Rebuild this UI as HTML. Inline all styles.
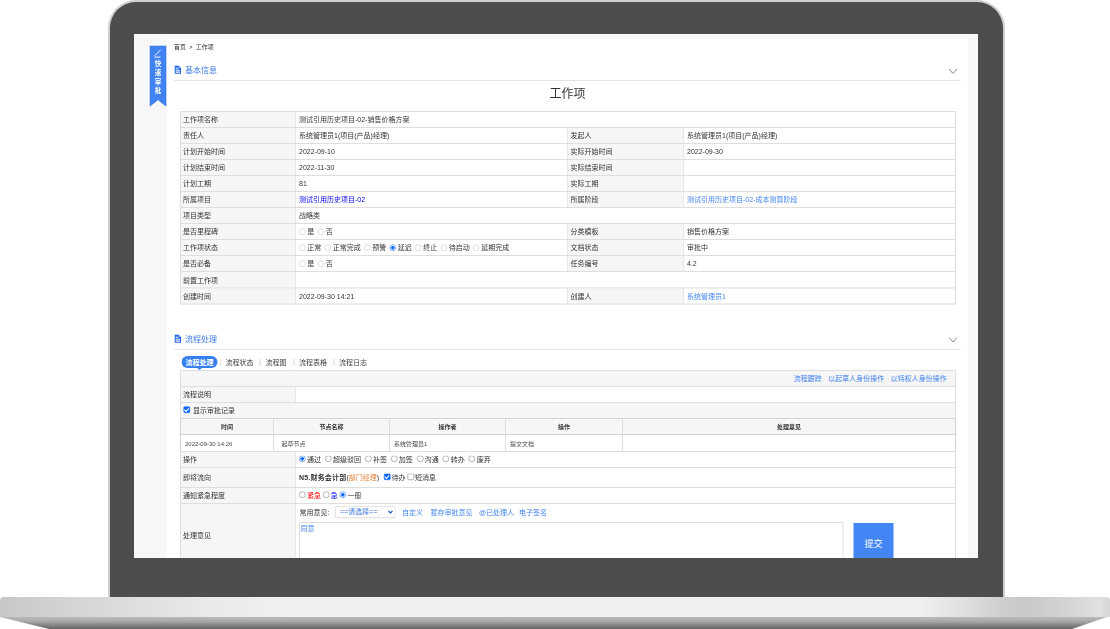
<!DOCTYPE html>
<html lang="zh-CN">
<head>
<meta charset="utf-8">
<title>工作项</title>
<style>
*{box-sizing:border-box;margin:0;padding:0}
html,body{width:1110px;height:629px;overflow:hidden;background:#fff}
body{position:relative;font-family:"Liberation Sans","Noto Sans CJK SC",sans-serif;color:#333}
/* laptop */
#lid{position:absolute;left:108px;top:0;width:897px;height:597px;background:#4d4d4d;border:2px solid #cfcfcf;border-bottom:0;border-radius:28px 28px 0 0}
#base{position:absolute;left:0;top:597px;width:1110px;height:20px;border-radius:4px 4px 0 0;
 background:linear-gradient(90deg,#c7c8c9 0,#d2d3d3 65px,#dedede 135px,#e9e9e9 205px,#f0f0f0 285px,#f0f0f0 920px,#e2e2e2 958px,#d0d0d0 998px,#c8c8c8 1025px,#d4d4d4 1068px,#e1e1e1 1100px,#d6d6d6 1110px)}
#foot{position:absolute;left:0;top:617px;width:1110px;height:12px}
#screen{position:absolute;left:134px;top:34px;width:844px;height:524px;overflow:hidden;background:#f7f7f7}
/* 2x page scaled to 0.5 */
#page{position:absolute;left:0;top:0;width:1688px;height:1048px;transform:scale(.5);transform-origin:0 0;font-size:14px;line-height:20px}
#panel{position:absolute;left:66px;top:10px;width:1602px;height:1060px;background:#fff}
.abs{position:absolute}
a{text-decoration:none}
/*CONTENTCSS*/
.rb{width:34px;text-align:center;color:#fff;font-weight:bold;font-size:13px;line-height:18px}
.bc{font-size:12px;line-height:20px;color:#333}
.bc .gt{margin:0 6.5px 0 7px;font-size:10px;font-weight:bold;position:relative;top:-.5px;color:#444}
.sh{height:24px;line-height:24px;font-size:16px;color:#3f7be6;white-space:nowrap}
.sh svg{vertical-align:-3px;margin-left:1.4px;margin-right:7.6px}
.hr{height:2px;background:#e3e3e3}
.ttl{text-align:center;font-size:24px;line-height:34px;color:#333}
.t{position:absolute;left:92px;width:1552px;border-collapse:collapse;table-layout:fixed}
.t td{border:2px solid #dedede;height:32px;padding:0 6px 0 6px;font-size:14px;line-height:20px;vertical-align:middle;white-space:nowrap;overflow:hidden}
.t td.l{background:#f6f6f6;padding-left:4px}
.t td{border-left-color:#e7e7e7;border-right-color:#e7e7e7}
.t td:first-child{border-left-color:#dedede}
.t td:last-child{border-right-color:#dedede}
.t td.l:nth-child(3){padding-left:5px}
.b1{color:#0000ee}
.b2{color:#4285f4}
.t td.rc{padding-left:5px}
.t td.rc2{padding-left:0}
.t td.rc3{padding-left:0}
.r{display:inline-block;width:13px;height:13px;border:1.8px solid #6c6c6c;border-radius:50%;vertical-align:-1.5px;margin:0 3px 0 4px;background:#fff}
.rc2 .r:first-child,.rc3 .r:first-child{margin-left:6px}
.rc3 .r{margin-left:3.5px}
.rc .r{margin:0 3px 0 7px}
.rc .r:first-child{margin-left:1.4px}
.r.d{border-color:#bdbdbd}
.r.on{border-color:#0f67ff;background:radial-gradient(circle,#0f67ff 0,#0f67ff 3.3px,#fff 3.9px)}
.rc2 .r,.rc3 .r{vertical-align:-.2px}
.c{display:inline-block;width:13px;height:13px;border:1.8px solid #6c6c6c;border-radius:2.5px;vertical-align:-.4px;margin:0 2px 0 3px;background:#fff;position:relative}
.c.on{background:#0f67ff;border-color:#0f67ff}
.c.on:after{content:"";position:absolute;left:2.3px;top:-.8px;width:3.6px;height:7.4px;border:solid #fff;border-width:0 2.2px 2.2px 0;transform:rotate(42deg)}
.t td.lk{text-align:right;padding-right:17px}
.lk a{margin-left:13px}
.t2 td{border-color:#d2d2d2;height:34px;font-size:12px;padding:2px 0 0 15px;color:#484848}
.t2 tr.h td{background:#f6f6f6;text-align:center;padding:0;height:32px;color:#333;font-weight:bold}
.t2 td.p8{padding-left:8px}
.t2 td:first-child{border-left-color:#cfcfcf}
.t2 td:last-child{border-right-color:#cfcfcf}
.t2 td{border-left-color:#dcdcdc;border-right-color:#dcdcdc}
.pill{width:72px;height:24px;line-height:24px;font-size:14px;border-radius:12px;background:#3680f4;color:#fff;font-weight:bold;text-align:center}
.tb{height:22px;line-height:22px;font-size:14px;color:#444;white-space:nowrap}
.sp{width:2px;height:14px;background:#dadada}
.op{position:absolute;left:7px;top:4px;height:24px;line-height:24px}
.sel{display:inline-block;width:121px;height:24px;border:1.6px solid #b9b9b9;border-radius:3px;margin:-2px 13px 0 11px;vertical-align:middle;line-height:20px;color:#3b78e0;padding-left:9px;position:relative;background:#fff}
.sel svg{position:absolute;right:4px;top:8px}
.op a{margin-right:15px}
.ta{position:absolute;left:6px;top:36px;width:1089px;height:88px;border:2px solid #dedede;color:#4285f4;padding:0 1px;line-height:20px}
.btn{position:absolute;left:1115px;top:38px;width:80px;height:80px;background:#4285f4;color:#fff;font-size:18px;text-align:center;line-height:82px}
/*ENDCSS*/
</style>
</head>
<body>
<div id="lid"></div>
<div id="base"></div>
<svg id="foot" viewBox="0 0 1110 12" preserveAspectRatio="none">
 <defs><linearGradient id="fg" x1="0" y1="0" x2="0" y2="1"><stop offset="0" stop-color="#bababa"/><stop offset=".35" stop-color="#a9a9a9"/><stop offset=".68" stop-color="#848585"/><stop offset="1" stop-color="#646566"/></linearGradient></defs>
 <polygon points="0,0 1107,0 1072,12 49,12" fill="url(#fg)"/>
</svg>
<div id="screen">
<div id="page">
<div id="panel"></div>
<!--CONTENT-->
<!-- ribbon -->
<svg class="abs" style="left:31px;top:23px" width="34" height="123" viewBox="0 0 34 123">
 <polygon points="1,1 33,1 33,121 17,108 1,121" fill="#4283f3" stroke="#3075ec" stroke-width="2"/>
 <path d="M11 20 L21.5 9.5 M10.5 23.2 H21" stroke="#fff" stroke-width="2" fill="none" stroke-linecap="round"/>
</svg>
<div class="abs rb" style="left:31px;top:50.5px">快<br>速<br>审<br>批</div>

<!-- breadcrumb -->
<div class="abs bc" style="left:80px;top:16px">首页<span class="gt">&gt;</span>工作项</div>

<!-- section 1 -->
<div class="abs sh" style="left:80px;top:60px"><svg width="13" height="17" viewBox="0 0 13 17"><path d="M0 0H8L13 5V16.6H0Z" fill="#1c63ee"/><path d="M8 0V5H13Z" fill="#8fb3f7"/><path d="M2.4 5.6H7.6M2.4 9.4H10.8M2.4 13.2H10.8" stroke="#fff" stroke-width="2.1"/></svg><span>基本信息</span></div>
<svg class="abs" style="left:1629px;top:69px" width="18" height="12" viewBox="0 0 18 12"><path d="M1 1L9 10L17 1" fill="none" stroke="#8a8a8a" stroke-width="2"/></svg>
<div class="abs hr" style="left:80px;top:92px;width:1573px"></div>

<div class="abs ttl" style="left:66px;top:102px;width:1602px">工作项</div>

<table class="t" style="top:154px">
<colgroup><col style="width:230px"><col style="width:544px"><col style="width:232px"><col style="width:544px"></colgroup>
<tr><td class="l">工作项名称</td><td colspan="3">测试引用历史项目-02-销售价格方案</td></tr>
<tr><td class="l">责任人</td><td>系统管理员1(项目(产品)经理)</td><td class="l">发起人</td><td>系统管理员1(项目(产品)经理)</td></tr>
<tr><td class="l">计划开始时间</td><td>2022-09-10</td><td class="l">实际开始时间</td><td>2022-09-30</td></tr>
<tr><td class="l">计划结束时间</td><td>2022-11-30</td><td class="l">实际结束时间</td><td></td></tr>
<tr><td class="l">计划工期</td><td>81</td><td class="l">实际工期</td><td></td></tr>
<tr><td class="l">所属项目</td><td><a class="b1">测试引用历史项目-02</a></td><td class="l">所属阶段</td><td><a class="b2">测试引用历史项目-02-成本测算阶段</a></td></tr>
<tr><td class="l">项目类型</td><td colspan="3">战略类</td></tr>
<tr><td class="l">是否里程碑</td><td class="rc"><i class="r d"></i>是<i class="r d"></i>否</td><td class="l">分类模板</td><td>销售价格方案</td></tr>
<tr><td class="l">工作项状态</td><td class="rc"><i class="r d"></i>正常<i class="r d"></i>正常完成<i class="r d"></i>预警<i class="r on"></i>延迟<i class="r d"></i>终止<i class="r d"></i>待启动<i class="r d"></i>延期完成</td><td class="l">文档状态</td><td>审批中</td></tr>
<tr><td class="l">是否必备</td><td class="rc"><i class="r d"></i>是<i class="r d"></i>否</td><td class="l">任务编号</td><td>4.2</td></tr>
<tr><td class="l" style="height:33px">前置工作项</td><td colspan="3"></td></tr>
<tr><td class="l">创建时间</td><td>2022-09-30 14:21</td><td class="l">创建人</td><td><a class="b2">系统管理员1</a></td></tr>
</table>

<!-- section 2 -->
<div class="abs sh" style="left:80px;top:598px"><svg width="13" height="17" viewBox="0 0 13 17"><path d="M0 0H8L13 5V16.6H0Z" fill="#1c63ee"/><path d="M8 0V5H13Z" fill="#8fb3f7"/><path d="M2.4 5.6H7.6M2.4 9.4H10.8M2.4 13.2H10.8" stroke="#fff" stroke-width="2.1"/></svg><span>流程处理</span></div>
<svg class="abs" style="left:1629px;top:606px" width="18" height="12" viewBox="0 0 18 12"><path d="M1 1L9 10L17 1" fill="none" stroke="#8a8a8a" stroke-width="2"/></svg>
<div class="abs hr" style="left:80px;top:630px;width:1573px"></div>

<!-- tabs -->
<div class="abs pill" style="left:95px;top:644px">流程处理</div>
<svg class="abs" style="left:125px;top:667px" width="12" height="6" viewBox="0 0 12 6"><path d="M0 0H12L6 5Z" fill="#3680f4"/></svg>
<i class="abs sp" style="left:173px;top:650px"></i><div class="abs tb" style="left:183px;top:646px">流程状态</div>
<i class="abs sp" style="left:251px;top:650px"></i><div class="abs tb" style="left:263px;top:646px">流程图</div>
<i class="abs sp" style="left:319px;top:650px"></i><div class="abs tb" style="left:330px;top:646px">流程表格</div>
<i class="abs sp" style="left:399px;top:650px"></i><div class="abs tb" style="left:410px;top:646px">流程日志</div>

<table class="t" style="top:672px">
<colgroup><col style="width:230px"><col style="width:1320px"></colgroup>
<tr><td class="l lk" colspan="2"><a class="b2">流程跟踪</a><a class="b2">以起草人身份操作</a><a class="b2">以特权人身份操作</a></td></tr>
<tr><td class="l">流程说明</td><td></td></tr>
<tr><td class="l" colspan="2"><i class="c on" style="margin-left:1px"></i><span style="margin-left:4px">显示审批记录</span></td></tr>
</table>

<table class="t t2" style="top:768px">
<colgroup><col style="width:186px"><col style="width:232px"><col style="width:232px"><col style="width:234px"><col style="width:666px"></colgroup>
<tr class="h"><td>时间</td><td>节点名称</td><td>操作者</td><td>操作</td><td>处理意见</td></tr>
<tr><td class="p8">2022-09-30 14:26</td><td>起草节点</td><td class="p8">系统管理员1</td><td class="p8">提交文档</td><td></td></tr>
</table>

<table class="t" style="top:834px">
<colgroup><col style="width:230px"><col style="width:1320px"></colgroup>
<tr><td class="l">操作</td><td class="rc2"><i class="r on"></i>通过 <i class="r"></i>超级驳回 <i class="r"></i>补签 <i class="r"></i>加签 <i class="r"></i>沟通 <i class="r"></i>转办 <i class="r"></i>废弃</td></tr>
<tr><td class="l" style="height:40px">即将流向</td><td><b style="letter-spacing:.38px">N5.财务会计部</b>(<span style="color:#e8823a">部门经理</span>) <i class="c on" style="margin-left:6px"></i>待办<i class="c" style="margin-left:4px"></i>短消息</td></tr>
<tr><td class="l">通知紧急程度</td><td class="rc3"><i class="r"></i><span style="color:#f00">紧急</span><i class="r"></i><span style="color:#00f">急</span><i class="r on"></i>一般</td></tr>
<tr><td class="l" style="height:128px">处理意见</td><td style="vertical-align:top;position:relative">
 <div class="op">常用意见:<span class="sel">==请选择==<svg width="10" height="7" viewBox="0 0 10 7"><path d="M1 1L5 5L9 1" fill="none" stroke="#1a4fbd" stroke-width="2.2"/></svg></span><a class="b2">自定义</a><a class="b2" style="margin-right:13px">暂存审批意见</a><a class="b2" style="margin-right:10px">@已处理人</a><a class="b2">电子签名</a></div>
 <div class="ta">同意</div>
 <div class="btn">提交</div>
</td></tr>
</table>
<!--ENDCONTENT-->
</div>
</div>
</body>
</html>
